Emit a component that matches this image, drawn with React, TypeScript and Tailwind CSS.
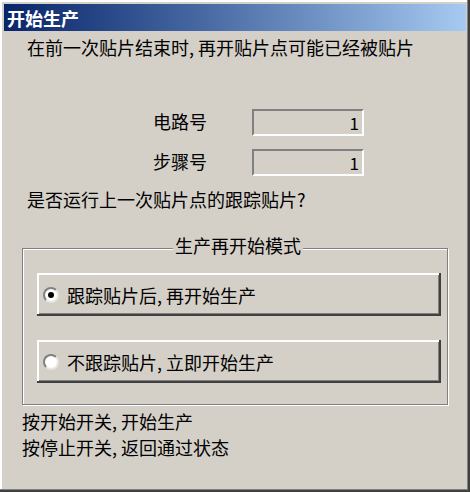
import React from "react";

const font = "font-['Noto_Sans_CJK_SC','Noto_Sans',sans-serif]";

const ValueBox: React.FC<{ value: string }> = ({ value }) => (
  <div className="w-[112px] h-[27px] border-t-2 border-l-2 border-t-[#808080] border-l-[#808080] border-b-2 border-r-2 border-b-white border-r-white bg-[#d4d0c8] flex items-center justify-end pr-[3px] text-[17px] leading-none">
    {value}
  </div>
);

const RadioButton: React.FC<{ label: string; checked?: boolean }> = ({
  label,
  checked = false,
}) => (
  <div className="h-[43px] w-[404px] bg-[#d4d0c8] shadow-[inset_-2px_-2px_#404040,inset_2px_2px_#ffffff,inset_-3px_-3px_#808080] flex items-center pl-[6px]">
    <span className="w-[16px] h-[16px] rounded-full bg-white border-2 border-t-[#808080] border-l-[#808080] border-b-[#e8e6e2] border-r-[#e8e6e2] flex items-center justify-center">
      {checked && <span className="w-[6px] h-[6px] rounded-full bg-black" />}
    </span>
    <span className="ml-[8px] text-[18px] leading-none">{label}</span>
  </div>
);

export default function App() {
  return (
    <div
      className={`w-[470px] h-[492px] bg-[#d4d0c8] p-[4px] text-black ${font} shadow-[inset_-2px_-2px_#404040,inset_-3px_-3px_#808080,inset_2px_2px_#ffffff] overflow-hidden`}
    >
      {/* Title bar */}
      <div className="h-[27px] w-[462px] bg-gradient-to-r from-[#0a246a] to-[#a6caf0] flex items-center pl-[3px]">
        <span className="text-white font-bold text-[18px] leading-none">
          开始生产
        </span>
      </div>

      <div className="pl-[18px] pr-[18px]">
        <div className="pl-[5px] mt-[4px] h-[24px] flex items-center text-[18px] leading-none">
          在前一次贴片结束时, 再开贴片点可能已经被贴片
        </div>

        {/* Number rows */}
        <div className="mt-[50px] flex items-center">
          <span className="w-[230px] pl-[131px] text-[18px] leading-none -mt-[3px]">
            电路号
          </span>
          <ValueBox value="1" />
        </div>
        <div className="mt-[13px] flex items-center">
          <span className="w-[230px] pl-[131px] text-[18px] leading-none -mt-[3px]">
            步骤号
          </span>
          <ValueBox value="1" />
        </div>

        <div className="pl-[5px] mt-[11px] h-[24px] flex items-center text-[18px] leading-none">
          是否运行上一次贴片点的跟踪贴片?
        </div>

        {/* Group box */}
        <div className="relative mt-[37px] w-[426px] h-[157px] border border-[#808080] shadow-[1px_1px_#ffffff,inset_1px_1px_#ffffff]">
          <span className="absolute -top-[15px] left-[150px] px-[2px] bg-[#d4d0c8] text-[18px] leading-[22px]">
            生产再开始模式
          </span>
          <div className="flex flex-col gap-[24px] pl-[14px] pt-[24px]">
            <RadioButton label="跟踪贴片后, 再开始生产" checked />
            <RadioButton label="不跟踪贴片, 立即开始生产" />
          </div>
        </div>

        <div className="mt-[3px] h-[26px] flex items-center text-[18px] leading-none">
          按开始开关, 开始生产
        </div>
        <div className="h-[26px] flex items-center text-[18px] leading-none">
          按停止开关, 返回通过状态
        </div>
      </div>
    </div>
  );
}
